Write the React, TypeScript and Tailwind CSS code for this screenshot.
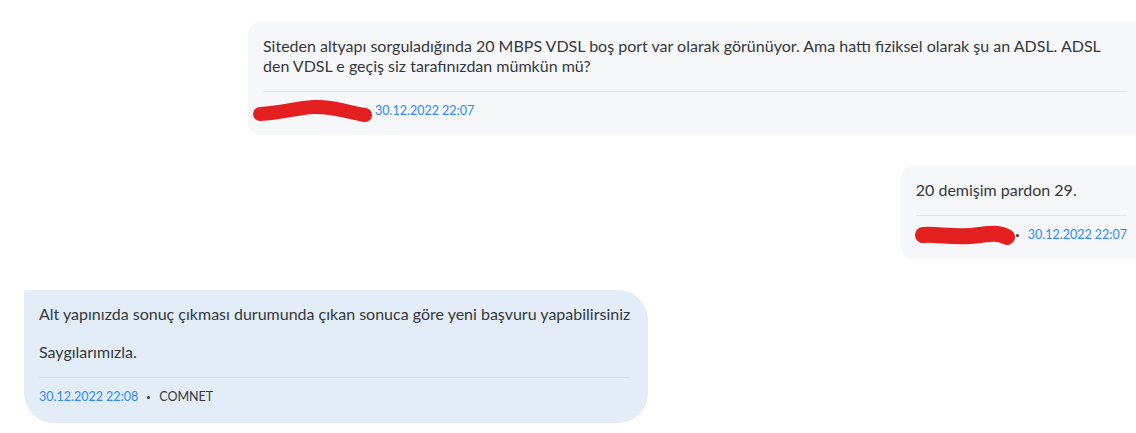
import React from 'react';

type Msg = {
    side: 'me' | 'them';
    paragraphs: string[];
    time: string;
    author?: string;
    scribble?: 'long' | 'short';
};

const messages: Msg[] = [
    {
        side: 'me',
        paragraphs: [
            'Siteden altyapı sorguladığında 20 MBPS VDSL boş port var olarak görünüyor. Ama hattı fiziksel olarak şu an ADSL. ADSL den VDSL e geçiş siz tarafınızdan mümkün mü?'
        ],
        time: '30.12.2022 22:07',
        scribble: 'long'
    },
    {
        side: 'me',
        paragraphs: ['20 demişim pardon 29.'],
        time: '30.12.2022 22:07',
        scribble: 'short'
    },
    {
        side: 'them',
        paragraphs: [
            'Alt yapınızda sonuç çıkması durumunda çıkan sonuca göre yeni başvuru yapabilirsiniz',
            'Saygılarımızla.'
        ],
        time: '30.12.2022 22:08',
        author: 'COMNET'
    }
];

// red marker over the sender's name, as in the screenshot
function Scribble({ kind }: { kind: 'long' | 'short' }) {
    if (kind === 'long') {
        return (
            <svg width="124" height="24" viewBox="0 0 124 24" className="-ml-[12px] -my-[3px] shrink-0">
                <path
                    d="M9 15 C 30 14, 45 9, 62 8 C 80 7, 92 12, 114 16"
                    fill="none"
                    stroke="#e41f1f"
                    strokeWidth="14"
                    strokeLinecap="round"
                />
            </svg>
        );
    }
    return (
        <svg width="107" height="24" viewBox="0 0 107 24" className="-ml-[4px] -my-[3px] shrink-0">
            <path
                d="M11 12 C 22 11, 40 14, 58 13 C 74 12, 84 8, 95 14"
                fill="none"
                stroke="#e41f1f"
                strokeWidth="16"
                strokeLinecap="round"
            />
        </svg>
    );
}

function Bubble({ msg }: { msg: Msg }) {
    const mine = msg.side === 'me';

    return (
        <div className={mine ? 'flex justify-end -mr-[7px]' : 'flex justify-start pl-[24px]'}>
            <div
                className={
                    mine
                        ? 'max-w-[895px] bg-[#f6f7f9] rounded-[12px] rounded-tr-none pl-[15px] pr-[16px] pt-[14px] pb-[15px]'
                        : 'bg-[#e2edf8] rounded-[30px] rounded-tl-none pl-[15px] pr-[18px] pt-[14px] pb-[17px]'
                }
            >
                <div className={`text-[16px] leading-[20px] text-[#35383d] ${mine ? 'pr-[12px]' : ''}`}>
                    {msg.paragraphs.map((p, i) => (
                        <p key={i} className={i > 0 ? 'mt-[18px]' : ''}>{p}</p>
                    ))}
                </div>

                <div
                    className={`mt-[15px] pt-[10px] border-t flex items-center h-[29px] text-[12.5px] leading-[18px] ${
                        mine ? 'border-[#e5e7ea]' : 'border-[#cfdeeb]'
                    }`}
                >
                    {msg.scribble && <Scribble kind={msg.scribble} />}
                    {msg.scribble === 'short' && (
                        <span className="w-[3px] h-[3px] rounded-full bg-[#35383d] -ml-[3px] mr-[9px]" />
                    )}
                    <time className="text-[#2f8af5]">{msg.time}</time>
                    {msg.author && (
                        <>
                            <span className="w-[3px] h-[3px] rounded-full bg-[#35383d] mx-[9px]" />
                            <span className="text-[#35383d] text-[12.5px] uppercase">{msg.author}</span>
                        </>
                    )}
                </div>
            </div>
        </div>
    );
}

export default function App() {
    return (
        <div
            className="w-[1136px] h-[433px] overflow-hidden bg-white pt-[22px] flex flex-col gap-[31px]"
            style={{ fontFamily: 'Lato, "Open Sans", sans-serif' }}
        >
            {messages.map((m, i) => (
                <Bubble key={i} msg={m} />
            ))}
        </div>
    );
}
